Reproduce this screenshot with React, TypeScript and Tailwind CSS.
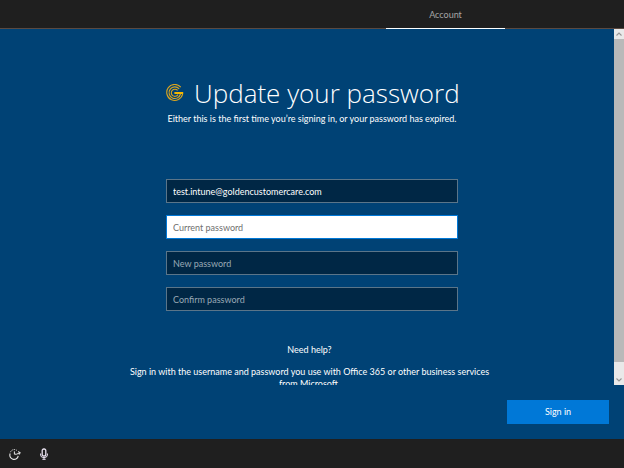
const fields = [
  { id: "current", label: "Current password", active: true },
  { id: "new", label: "New password", active: false },
  { id: "confirm", label: "Confirm password", active: false },
];

function Logo() {
  return (
    <svg viewBox="0 0 18 18" className="size-[18px] shrink-0" fill="none" stroke="#d9a520" strokeWidth="1.1" aria-hidden="true">
      <path d="M14.8 3.2A8 8 0 1 0 16.6 10" />
      <path d="M13.2 4.8A5.8 5.8 0 1 0 14.5 10" />
      <path d="M11.6 6.4A3.6 3.6 0 1 0 12 10.6" />
      <path d="M8.4 9H17.2" stroke="#f5b800" strokeWidth="2" />
    </svg>
  );
}

function EaseOfAccessIcon() {
  return (
    <svg viewBox="0 0 12 12" className="size-3" fill="none" stroke="#e8e8e8" aria-hidden="true">
      <path d="M1.2 5.5A4.2 4.2 0 1 0 9.2 7.8" strokeWidth="1.1" />
      <path d="M1.4 4.2A4.2 4.2 0 0 1 7.8 2.4" strokeDasharray="1.2 0.9" />
      <path d="M5.4 3.4V6.2H7.6L11.2 4.6M9 3.6L11.2 4.6L10.2 6.6" />
    </svg>
  );
}

function MicIcon() {
  return (
    <svg viewBox="0 0 10 12" className="h-3 w-[10px]" fill="none" stroke="#e8e0ee" aria-hidden="true">
      <rect x="3.2" y="1" width="3.6" height="7" rx="1.6" strokeWidth="1.3" />
      <path d="M1.6 5.5V7A3.4 2.6 0 0 0 8.4 7V5.5M5 9.6V11.4M3.4 11.3H6.6" />
    </svg>
  );
}

function Chevron({ down = false }: { down?: boolean }) {
  return (
    <svg viewBox="0 0 6 4" className="h-1 w-1.5" fill="none" stroke="#959595" strokeWidth="1.1" aria-hidden="true">
      <path d={down ? "M0.5 0.5L3 3L5.5 0.5" : "M0.5 3.5L3 1L5.5 3.5"} />
    </svg>
  );
}

export default function App() {
  return (
    <div className="flex h-screen flex-col bg-[#004275] font-[Lato,'Open_Sans',sans-serif] text-[9px] leading-3 text-white">
      <header className="flex h-[29px] shrink-0 justify-end border-b border-[#5a4a42] bg-[#1f1f1f] pr-[119px]">
        <div className="-mb-px flex w-[119px] items-center justify-center border-b border-white pt-px text-[#a6a6a6]">
          Account
        </div>
      </header>

      <div className="flex min-h-0 flex-1">
        <main className="min-w-0 flex-1 overflow-hidden pt-11">
          <form id="update-password" className="flex flex-col items-center pl-[10px]">
            <div className="flex w-[292px] items-center gap-[10px]">
              <Logo />
              <h1 className="font-['Open_Sans',sans-serif] text-[26px] leading-10 font-light whitespace-nowrap">
                Update your password
              </h1>
            </div>
            <p className="whitespace-nowrap">Either this is the first time you’re signing in, or your password has expired.</p>
            <div className="mt-[54px] flex w-[292px] flex-col gap-3">
              <input
                type="email"
                aria-label="User name"
                defaultValue="test.intune@goldencustomercare.com"
                className="h-6 border border-[#5b7589] bg-[#002745] px-1.5 outline-none"
              />
              {fields.map((field) => (
                <input
                  key={field.id}
                  id={field.id}
                  type="password"
                  aria-label={field.label}
                  placeholder={field.label}
                  className={
                    field.active
                      ? "h-6 border border-[#0078d7] bg-white px-1.5 text-black outline-none placeholder:text-[#6f6f6f]"
                      : "h-6 border border-[#5b7589] bg-[#002745] px-1.5 outline-none placeholder:text-[#99a9b5]"
                  }
                />
              ))}
            </div>
          </form>
          <section className="mt-[33px] flex flex-col items-center pl-[5px] text-center">
            <h2>Need help?</h2>
            <p className="mt-[10px] w-[400px]">
              Sign in with the username and password you use with Office 365 or other business services
              <br />
              from Microsoft.
            </p>
          </section>
        </main>

        <div className="flex w-[10px] shrink-0 flex-col bg-[#e9e9e9]">
          <button type="button" aria-label="Scroll up" className="flex h-[10px] items-center justify-center">
            <Chevron />
          </button>
          <div className="flex-1 bg-[#b9b9b9]" />
          <button type="button" aria-label="Scroll down" className="flex h-[23px] items-end justify-center pb-[3px]">
            <Chevron down />
          </button>
        </div>
      </div>

      <div className="flex h-[54px] shrink-0 justify-end pt-[15px] pr-[15px]">
        <button type="submit" form="update-password" className="h-6 w-[102px] bg-[#0078d7]">
          Sign in
        </button>
      </div>

      <footer className="flex h-[29px] shrink-0 items-center gap-[18px] bg-[#1f1f1f] pl-[9px]">
        <button type="button" aria-label="Ease of access">
          <EaseOfAccessIcon />
        </button>
        <button type="button" aria-label="Speech">
          <MicIcon />
        </button>
      </footer>
    </div>
  );
}
